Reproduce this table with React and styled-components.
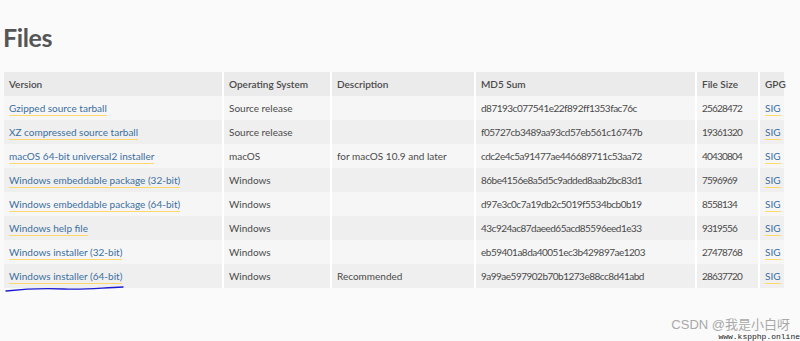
import React from 'react'
import styled, { createGlobalStyle } from 'styled-components'

const GlobalStyle = createGlobalStyle`
  html, body {
    margin: 0;
    padding: 0;
    background: #fafafa;
  }
  body {
    font-family: Lato, "Noto Sans", sans-serif;
  }
`;

const Page = styled.div`
  position: relative;
  width: 800px;
  height: 341px;
  overflow: hidden;
  background: #fafafa;
  padding: 22px 4px 0 4px;
  box-sizing: border-box;
`;

const Title = styled.h2`
  margin: 0 0 20px -1px;
  font-size: 25px;
  line-height: 30px;
  font-weight: 700;
  letter-spacing: -0.4px;
  color: #555;
`;

const Table = styled.table`
  width: 780px;
  border-collapse: collapse;
  table-layout: fixed;
  font-size: 10px;
  color: #4a4a4a;
`;

const Th = styled.th`
  box-sizing: border-box;
  width: ${({ w }) => w}px;
  height: 24px;
  padding: 0 5px;
  text-align: left;
  font-weight: 600;
  background: #ebebeb;
  border-right: 2px solid #fff;
  &:last-child { border-right: none; }
`;

const Row = styled.tr`
  background: ${({ even }) => (even ? '#efefef' : '#f6f6f6')};
`;

const Td = styled.td`
  height: 24px;
  padding: 0 5px;
  white-space: nowrap;
  overflow: hidden;
  border-right: 2px solid #fff;
  &:last-child { border-right: none; }
`;

const Num = styled.span`
  letter-spacing: ${({ tight }) => tight}px;
`;

const Link = styled.a`
  color: #3b6fa0;
  text-decoration: none;
  border-bottom: 1px solid #ffd86b;
  padding-bottom: 1px;
`;

const Scribble = styled.svg`
  position: absolute;
  left: 4px;
  top: 283px;
`;

const Watermark = styled.div`
  position: absolute;
  right: 10px;
  bottom: 8px;
  font-family: "Liberation Sans", "Noto Sans CJK SC", sans-serif;
  font-size: 13px;
  color: #a9a9a9;
`;

const Site = styled.div`
  position: absolute;
  right: 0;
  bottom: 0;
  font-family: "Liberation Mono", monospace;
  font-size: 8px;
  line-height: 8px;
  color: #222;
`;

const columns = [
  ['Version', 219],
  ['Operating System', 108],
  ['Description', 144],
  ['MD5 Sum', 221],
  ['File Size', 63],
  ['GPG', 25],
];

const files = [
  ['Gzipped source tarball', 'Source release', '', 'd87193c077541e22f892ff1353fac76c', '25628472'],
  ['XZ compressed source tarball', 'Source release', '', 'f05727cb3489aa93cd57eb561c16747b', '19361320'],
  ['macOS 64-bit universal2 installer', 'macOS', 'for macOS 10.9 and later', 'cdc2e4c5a91477ae446689711c53aa72', '40430804'],
  ['Windows embeddable package (32-bit)', 'Windows', '', '86be4156e8a5d5c9added8aab2bc83d1', '7596969'],
  ['Windows embeddable package (64-bit)', 'Windows', '', 'd97e3c0c7a19db2c5019f5534bcb0b19', '8558134'],
  ['Windows help file', 'Windows', '', '43c924ac87daeed65acd85596eed1e33', '9319556'],
  ['Windows installer (32-bit)', 'Windows', '', 'eb59401a8da40051ec3b429897ae1203', '27478768'],
  ['Windows installer (64-bit)', 'Windows', 'Recommended', '9a99ae597902b70b1273e88cc8d41abd', '28637720'],
];

export default function App() {
  return (
    <Page>
      <GlobalStyle />
      <Title>Files</Title>
      <Table>
        <thead>
          <tr>
            {columns.map(([name, w]) => (
              <Th key={name} w={w}>{name}</Th>
            ))}
          </tr>
        </thead>
        <tbody>
          {files.map(([version, os, desc, md5, size], i) => (
            <Row key={version} even={i % 2 === 1}>
              <Td><Link href="#">{version}</Link></Td>
              <Td>{os}</Td>
              <Td>{desc}</Td>
              <Td><Num tight={-0.5}>{md5}</Num></Td>
              <Td><Num tight={-0.8}>{size}</Num></Td>
              <Td><Link href="#">SIG</Link></Td>
            </Row>
          ))}
        </tbody>
      </Table>
      <Scribble width="124" height="12" viewBox="0 0 124 12">
        <path d="M2 8 C 20 6, 40 5, 60 6 C 80 7, 95 5, 119 4" fill="none" stroke="#1b1bd0" strokeWidth="1.3" strokeLinecap="round" />
      </Scribble>
      <Watermark>CSDN @我是小白呀</Watermark>
      <Site>www.kspphp.online</Site>
    </Page>
  )
}
